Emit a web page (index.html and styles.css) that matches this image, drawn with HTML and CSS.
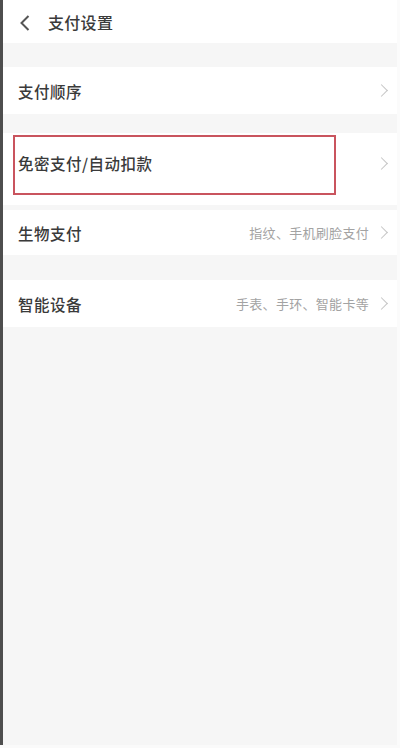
FILE: index.html
```html
<!DOCTYPE html>
<html lang="zh">
<head>
<meta charset="utf-8">
<link rel="stylesheet" href="styles.css">
</head>
<body>
<div class="frame">
  <header class="topbar">
    <svg class="back" width="12" height="18" viewBox="0 0 12 18"><path d="M9.5 2 L2.5 9 L9.5 16" fill="none" stroke="#555" stroke-width="2"/></svg>
    <span class="title">支付设置</span>
  </header>
  <div class="row r1">
    <span class="label">支付顺序</span>
    <span class="chev"></span>
  </div>
  <div class="row r2">
    <span class="label">免密支付/自动扣款</span>
    <span class="chev"></span>
    <div class="mark"></div>
  </div>
  <div class="row r3">
    <span class="label">生物支付</span>
    <span class="sub">指纹、手机刷脸支付</span>
    <span class="chev"></span>
  </div>
  <div class="row r4">
    <span class="label">智能设备</span>
    <span class="sub">手表、手环、智能卡等</span>
    <span class="chev"></span>
  </div>
</div>
</body>
</html>
```
FILE: styles.css
```css
* { box-sizing: border-box; }
html, body { margin: 0; padding: 0; }
body {
  width: 400px;
  height: 748px;
  background: #fafafa;
  font-family: "Noto Sans CJK SC", "Noto Sans", sans-serif;
  overflow: hidden;
}
.frame {
  width: 400px;
  height: 745px;
  background: #f6f6f6;
  border-left: 3px solid #4e4e4e;
  border-right: 3px solid #fbfbfb;
  display: flex;
  flex-direction: column;
}
.topbar {
  height: 43px;
  background: #fff;
  display: flex;
  align-items: center;
  padding-left: 16px;
  margin-bottom: 24px;
}
.back { margin-top: 2px; }
.title {
  margin-left: 17px;
  font-size: 16px;
  font-weight: 500;
  color: #3a3a3a;
  letter-spacing: 0.3px;
}
.row {
  position: relative;
  background: #fff;
  display: flex;
  align-items: center;
  padding: 0 8px 0 15px;
}
.r1 { height: 47px; margin-bottom: 19px; }
.r2 { height: 72px; padding-bottom: 12px; margin-bottom: 5px; }
.r3 { height: 45px; margin-bottom: 25px; }
.r4 { height: 47px; }
.label {
  font-size: 15.5px;
  font-weight: 500;
  color: #3a3a3a;
  flex: 1;
  letter-spacing: 0.5px;
}
.sub {
  font-size: 13px;
  color: #a3a3a3;
  margin-right: 8px;
  letter-spacing: 0.3px;
}
.chev {
  width: 9px;
  height: 9px;
  border-top: 1.3px solid #c4c4c4;
  border-right: 1.3px solid #c4c4c4;
  transform: rotate(45deg);
  margin-right: 3px;
}
.mark {
  position: absolute;
  left: 10px;
  top: 2px;
  width: 323px;
  height: 60px;
  border: 2px solid #c9545e;
}
```
